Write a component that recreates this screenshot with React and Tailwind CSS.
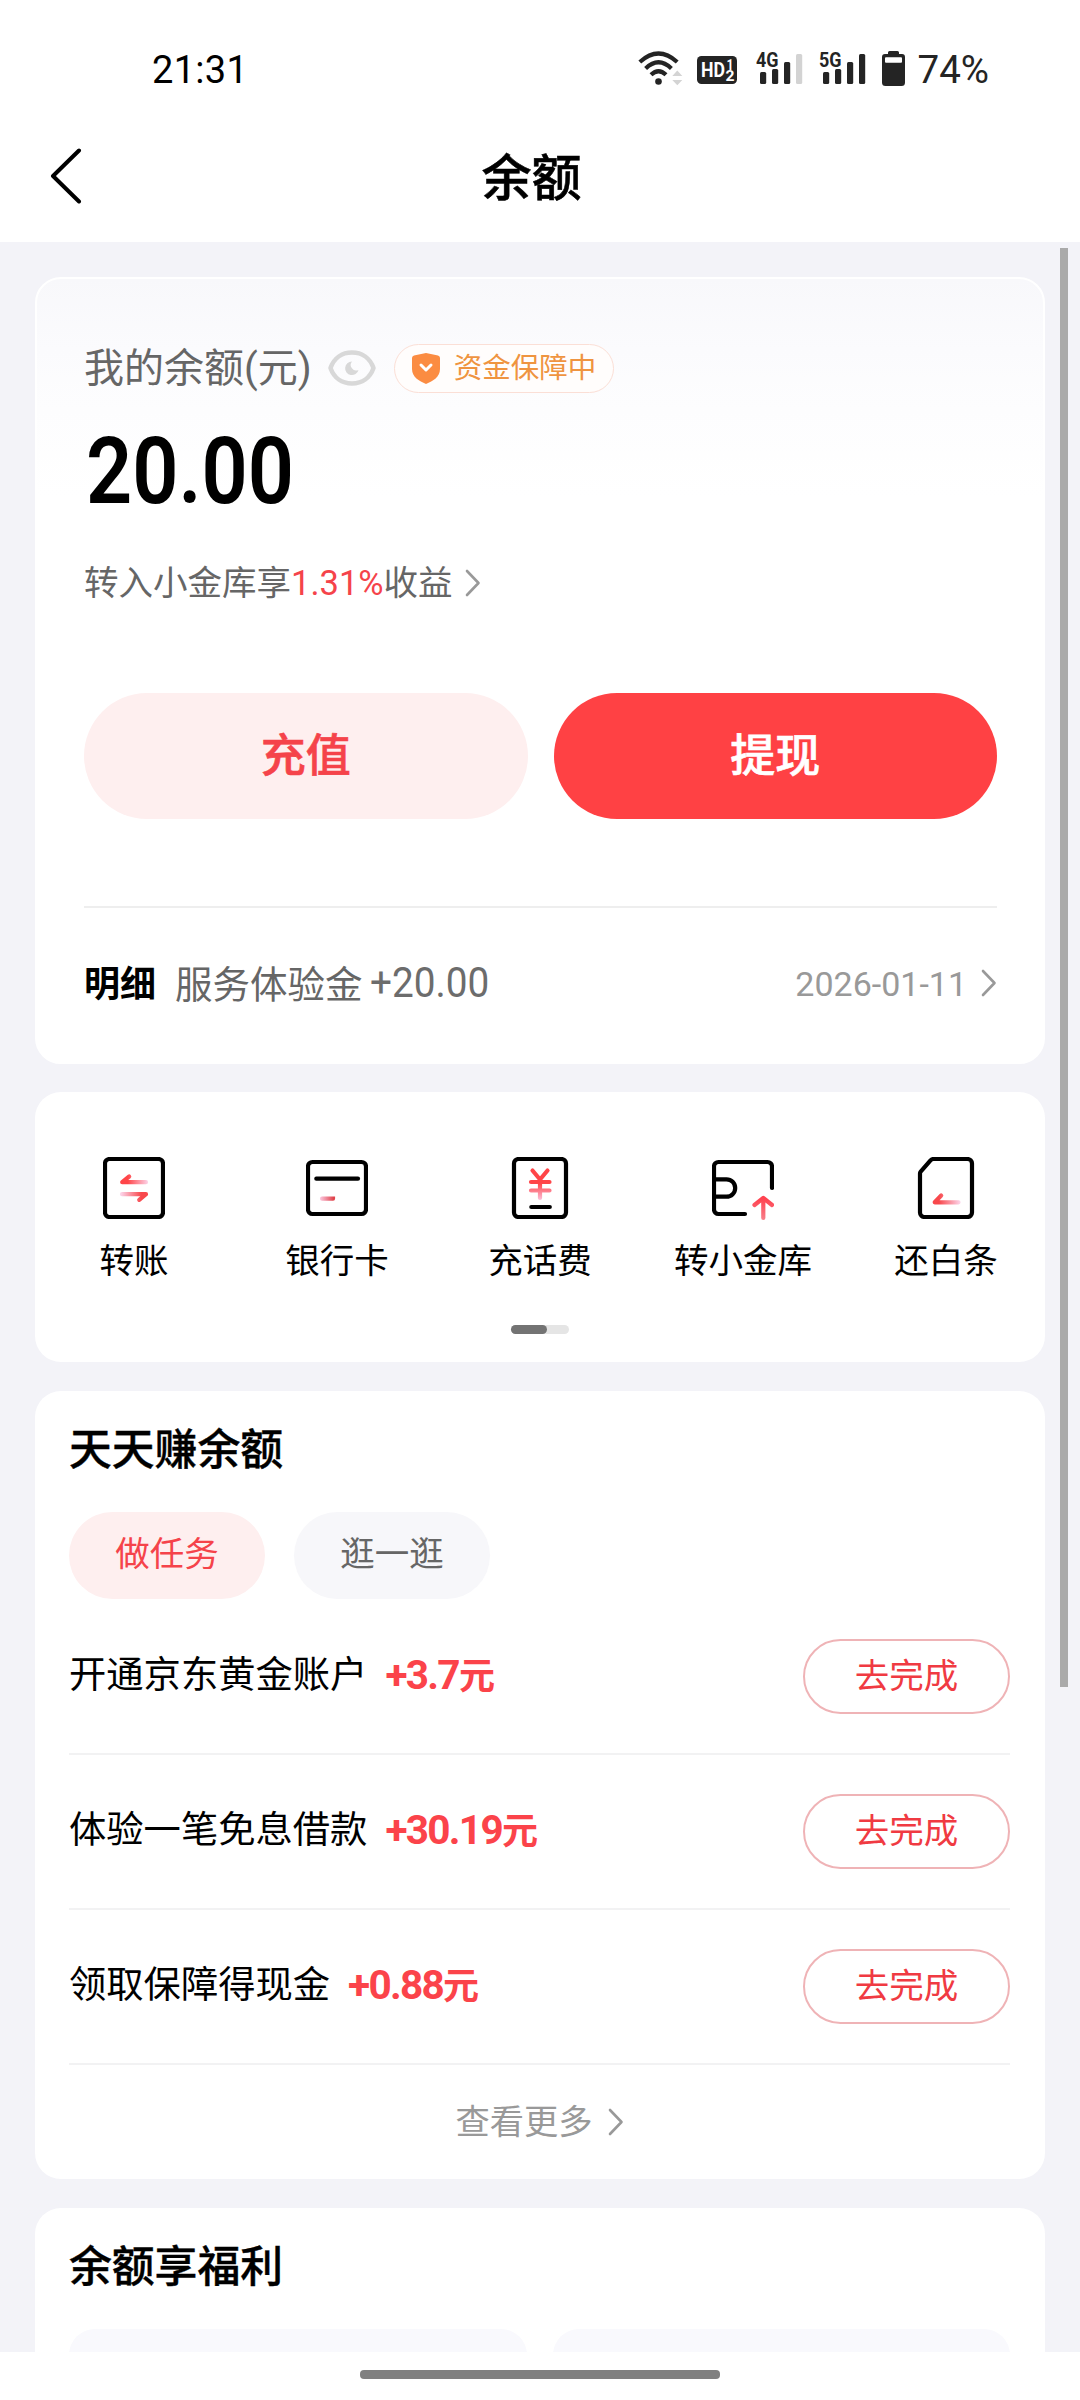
const DARK = "#242424";

function Chevron({ color = "#999" }) {
  return (
    <svg width="16" height="28" viewBox="0 0 16 28" fill="none" stroke={color} strokeWidth="2.6" strokeLinecap="round" strokeLinejoin="round">
      <path d="M2 2L13.5 14L2 26" />
    </svg>
  );
}

function WifiIcon() {
  return (
    <svg width="46" height="38" viewBox="18 19 46 38" fill="none" stroke={DARK} strokeWidth="4.2">
      <path d="M19.8 32Q38.5 15 57.2 32" />
      <path d="M25.6 38.4Q38.5 26 51.4 38.4" />
      <path d="M31 44.8Q38.5 37.6 46 44.8" />
      <circle cx="38.5" cy="51.5" r="3.3" fill={DARK} stroke="none" />
      <path d="M52.3 46L57.3 40.6L62.3 46ZM52.3 50H62.3L57.3 55.3Z" fill="#d4d4d4" stroke="none" />
    </svg>
  );
}

function HdIcon() {
  return (
    <svg width="40" height="28" viewBox="0 0 40 28" fontFamily="Roboto, sans-serif" fontWeight="700" fill="#fff">
      <rect width="40" height="28" rx="4.5" fill={DARK} />
      <text x="4" y="21.3" fontSize="21" textLength="24" lengthAdjust="spacingAndGlyphs">HD</text>
      <text x="29.5" y="13.5" fontSize="14" textLength="7" lengthAdjust="spacingAndGlyphs">1</text>
      <text x="28.5" y="25" fontSize="14" textLength="9" lengthAdjust="spacingAndGlyphs">2</text>
    </svg>
  );
}

function SignalIcon({ label, last }) {
  return (
    <svg width="48" height="46" viewBox="0 -6 48 46" fill={DARK}>
      <text x="0" y="16.3" fontSize="20.5" fontWeight="700" fontFamily="Roboto, sans-serif" textLength="22.5" lengthAdjust="spacingAndGlyphs">{label}</text>
      <rect x="4" y="21" width="6.2" height="12" rx="1.5" />
      <rect x="16" y="18" width="6.2" height="15" rx="1.5" />
      <rect x="28" y="11" width="6.2" height="22" rx="1.5" />
      <rect x="40" y="3" width="6.2" height="30" rx="1.5" fill={last} />
    </svg>
  );
}

function BatteryIcon() {
  return (
    <svg width="23" height="35" viewBox="0 0 23 35" fill={DARK}>
      <path d="M7.5 0h8a1.5 1.5 0 0 1 1.5 1.5V3h3a3 3 0 0 1 3 3v25.5a3.5 3.5 0 0 1-3.5 3.5h-16a3.5 3.5 0 0 1-3.5-3.5V6a3 3 0 0 1 3-3h3V1.5A1.5 1.5 0 0 1 7.5 0z" />
      <rect x="3" y="6.3" width="17" height="5.5" rx="1" fill="#fff" />
    </svg>
  );
}

function TransferIcon() {
  return (
    <svg width="62" height="62" viewBox="0 0 62 62" fill="none" strokeWidth="4.2" strokeLinecap="round" strokeLinejoin="round">
      <defs>
        <linearGradient id="tl" gradientUnits="userSpaceOnUse" x1="18" y1="0" x2="45" y2="0">
          <stop offset="0.25" stopColor="#ff4548" /><stop offset="1" stopColor="#fcd3e8" />
        </linearGradient>
        <linearGradient id="tr" gradientUnits="userSpaceOnUse" x1="45" y1="0" x2="18" y2="0">
          <stop offset="0.25" stopColor="#f8484c" /><stop offset="1" stopColor="#fcd3e8" />
        </linearGradient>
      </defs>
      <rect x="2" y="2" width="58" height="58" rx="4.5" stroke="#000" />
      <path d="M43 25.2H19.2L26.2 19.5" stroke="url(#tl)" />
      <path d="M19 37.2H43L36.2 42.8" stroke="url(#tr)" />
    </svg>
  );
}

function CardIcon() {
  return (
    <svg width="62" height="62" viewBox="0 0 62 62" fill="none" strokeWidth="4.2" strokeLinecap="round">
      <defs>
        <linearGradient id="cd" gradientUnits="userSpaceOnUse" x1="14" y1="0" x2="29" y2="0">
          <stop offset="0" stopColor="#fcc8e0" /><stop offset="0.9" stopColor="#e0444c" />
        </linearGradient>
      </defs>
      <rect x="2" y="5" width="58" height="52" rx="4.5" stroke="#000" />
      <path d="M10.3 21.7H52" stroke="#000" />
      <path d="M16 41.7H27v0.01" stroke="url(#cd)" />
    </svg>
  );
}

function PhoneBillIcon() {
  return (
    <svg width="62" height="62" viewBox="0 0 62 62" fill="none" strokeWidth="4.2" strokeLinecap="round" strokeLinejoin="round">
      <defs>
        <linearGradient id="pb" gradientUnits="userSpaceOnUse" x1="0" y1="12" x2="0" y2="44">
          <stop offset="0.45" stopColor="#ff4548" /><stop offset="1" stopColor="#fcc8e4" />
        </linearGradient>
      </defs>
      <rect x="5" y="2" width="52" height="58" rx="4.5" stroke="#000" />
      <path d="M23.5 13.5L31 22.5L38.5 13.5M22 25H40.5M22 33.5H40.5M31 22.5V41" stroke="url(#pb)" />
      <path d="M22.3 50H40.8" stroke="#000" />
    </svg>
  );
}

function VaultIcon() {
  return (
    <svg width="62" height="64" viewBox="0 0 62 64" fill="none" strokeWidth="4.2" strokeLinecap="round" strokeLinejoin="round">
      <defs>
        <linearGradient id="va" gradientUnits="userSpaceOnUse" x1="0" y1="38" x2="0" y2="64">
          <stop offset="0.15" stopColor="#ff4350" /><stop offset="1" stopColor="#f7848f" />
        </linearGradient>
      </defs>
      <path d="M60 31V9.5A4.5 4.5 0 0 0 55.5 5H6.5A4.5 4.5 0 0 0 2 9.5V52.5A4.5 4.5 0 0 0 6.5 57H33" stroke="#000" />
      <path d="M3 22.3H14.5A8.7 8.7 0 0 1 14.5 39.7H3" stroke="#000" />
      <path d="M51.3 61V41M42.5 48L51.3 41L60 48" stroke="url(#va)" />
    </svg>
  );
}

function RepayIcon() {
  return (
    <svg width="62" height="62" viewBox="0 0 62 62" fill="none" strokeWidth="4.2" strokeLinecap="round" strokeLinejoin="round">
      <defs>
        <linearGradient id="rp" gradientUnits="userSpaceOnUse" x1="17" y1="0" x2="45" y2="0">
          <stop offset="0.25" stopColor="#f8484c" /><stop offset="1" stopColor="#fcd3e8" />
        </linearGradient>
      </defs>
      <path d="M18.5 2H52.5A4.5 4.5 0 0 1 57 6.5V55.5A4.5 4.5 0 0 1 52.5 60H9.5A4.5 4.5 0 0 1 5 55.5V16.5Q5 15.5 5.7 14.7L15.5 3.3Q16.7 2 18.5 2Z" stroke="#000" />
      <path d="M43.5 45.3H19.7L26.2 38.5" stroke="url(#rp)" />
    </svg>
  );
}

const shortcuts = [
  ["转账", TransferIcon],
  ["银行卡", CardIcon],
  ["充话费", PhoneBillIcon],
  ["转小金库", VaultIcon],
  ["还白条", RepayIcon],
];

const tasks = [
  ["开通京东黄金账户", "+3.7"],
  ["体验一笔免息借款", "+30.19"],
  ["领取保障得现金", "+0.88"],
];

export default function App() {
  return (
    <div className="flex h-[2400px] w-[1080px] flex-col overflow-hidden bg-white font-['Roboto','Noto_Sans_CJK_SC',sans-serif] text-black">
      <div className="flex h-[139px] shrink-0 items-center pr-[91px] pl-[152px]">
        <span className="text-[38px] leading-[44px] tracking-[0.3px]">21:31</span>
        <div className="ml-auto flex items-center">
          <span className="pb-[3px]"><WifiIcon /></span>
          <span className="ml-[13px] pt-[1px]"><HdIcon /></span>
          <span className="ml-[19px] pb-[3px]"><SignalIcon label="4G" last="#d3d3d3" /></span>
          <span className="ml-[15px] pb-[3px]"><SignalIcon label="5G" last={DARK} /></span>
          <span className="ml-[15px] pb-[2px]"><BatteryIcon /></span>
          <span className="ml-[13px] text-[38.5px] leading-[44px] text-[#242424]">74%</span>
        </div>
      </div>
      <header className="grid h-[103px] shrink-0 grid-cols-[1fr_auto_1fr] items-center pr-[67px] pb-[25px] pl-[50px]">
        <svg className="mb-[5px]" width="32" height="56" viewBox="0 0 32 56" fill="none" stroke="#000" strokeWidth="4" strokeLinecap="round" strokeLinejoin="round">
          <path d="M29 2.5L3 28L29 53.5" />
        </svg>
        <h1 className="pt-[2px] text-[50px] leading-[60px] font-medium [-webkit-text-stroke:0.5px_#000]">余额</h1>
        <span />
      </header>

      <div className="relative flex h-[2110px] shrink-0 flex-col overflow-hidden bg-[#f3f3f8] px-[35px] pt-[35px]">
        <div className="absolute top-[6px] right-[12px] h-[1439px] w-[8px] bg-[#aaa]" />

        <section className="flex h-[787px] shrink-0 flex-col rounded-[26px] border-2 border-white bg-[linear-gradient(#f8f8fb,#fbfbfd_70px,#fdfdfe_130px,#fff_220px)] pr-[46px] pl-[47px]">
          <div className="mt-[64px] flex h-[50px] items-center">
            <span className="pt-[1px] text-[40px] leading-[50px] text-[#666]">我的余额(元)</span>
            <svg className="ml-[16px]" width="48" height="36" viewBox="0 0 48 36" fill="none">
              <path d="M2.5 18C6 8 14 2.5 24 2.5S42 8 45.5 18C42 28 34 33.5 24 33.5S6 28 2.5 18Z" stroke="#d8d8d8" strokeWidth="4.5" strokeLinejoin="round" />
              <path d="M24 11.5A6.8 6.8 0 1 0 30.5 20A5.5 5.5 0 0 1 24 11.5Z" fill="#d8d8d8" />
            </svg>
            <div className="ml-[18px] flex h-[49px] w-[220px] items-center rounded-full border-[1.5px] border-[#fbdfd6] bg-[#fffdfc] pl-[17px]">
              <svg width="28" height="31" viewBox="0 0 28 31">
                <path d="M14 0L26 2.5Q28 3 28 5V16C28 24 21 28 14 31C7 28 0 24 0 16V5Q0 3 2 2.5Z" fill="#fb8c42" />
                <path d="M9 12L14 17L19 12" fill="none" stroke="#fff" strokeWidth="3" strokeLinecap="round" strokeLinejoin="round" />
              </svg>
              <span className="ml-[14px] pt-[1px] text-[28.5px] leading-[40px] text-[#ef9440]">资金保障中</span>
            </div>
          </div>
          <div className="mt-[29px] ml-[2px] h-[100px] origin-left scale-x-[0.87] text-[93px] leading-[100px] font-semibold">20.00</div>
          <div className="mt-[41px] flex h-[40px] items-center text-[34.5px] leading-[40px] text-[#666]">
            转入小金库享<span className="text-[#f5434a]">1.31%</span>收益
            <span className="ml-[12px]"><Chevron /></span>
          </div>
          <div className="mt-[90px] grid h-[126px] grid-cols-2 gap-[26px] text-[45px] leading-[60px] font-medium">
            <button className="rounded-full bg-[#feefef] pt-[2px] text-[#f5434a] [-webkit-text-stroke:0.6px_#f5434a]">充值</button>
            <button className="rounded-full bg-[#ff4144] pt-[2px] text-white [-webkit-text-stroke:0.6px_#fff]">提现</button>
          </div>
          <div className="mt-[87px] h-[2px] bg-[#eee]" />
          <div className="mt-[49px] flex h-[54px] items-center">
            <span className="pt-[1px] text-[36px] leading-[54px] font-bold">明细</span>
            <span className="ml-[19px] pt-[1px] text-[37.5px] leading-[54px] text-[#666]">服务体验金</span>
            <span className="mb-[4px] ml-[7px] w-[130px] origin-left scale-x-[0.9] text-[43px] leading-[54px] font-normal text-[#6c6c6c]">+20.00</span>
            <span className="ml-auto text-[34px] leading-[54px] text-[#999]">2026-01-11</span>
            <span className="mb-[3px] ml-[14px]"><Chevron /></span>
          </div>
        </section>

        <section className="mt-[28px] flex h-[270px] shrink-0 flex-col items-center rounded-[26px] bg-white pt-[65px]">
          <div className="grid grid-cols-[repeat(5,203px)] justify-center">
            {shortcuts.map(([label, Icon]) => (
              <div key={label} className="flex flex-col items-center">
                <div className="h-[82px]"><Icon /></div>
                <span className="text-[34.5px] leading-[44px]">{label}</span>
              </div>
            ))}
          </div>
          <div className="mt-[42px] h-[9px] w-[58px] rounded-full bg-[#e5e5e5]">
            <div className="h-full w-[36px] rounded-full bg-[#737373]" />
          </div>
        </section>

        <section className="mt-[29px] flex h-[788px] shrink-0 flex-col rounded-[26px] bg-white pr-[35px] pl-[34px]">
          <h2 className="mt-[29px] text-[42.8px] leading-[60px] font-medium [-webkit-text-stroke:0.4px_#000]">天天赚余额</h2>
          <div className="mt-[32px] mb-[1px] flex h-[87px] gap-[29px] text-[34.5px]">
            <button className="w-[196px] rounded-full bg-[#feefef] text-[#f5434a]">做任务</button>
            <button className="w-[196px] rounded-full bg-[#f7f7fa] text-[#666]">逛一逛</button>
          </div>
          {tasks.map(([name, amount]) => (
            <div key={name} className="flex h-[155.6px] items-center border-b-2 border-[#f2f2f3]">
              <span className="mb-[1.5px] text-[37.3px] leading-[50px]">{name}</span>
              <span className="mb-[1px] ml-[18px] text-[40.5px] leading-[50px] font-bold tracking-[-1.7px] text-[#fb434a]">
                {amount}
                <span className="text-[36px]">元</span>
              </span>
              <button className="ml-auto h-[75px] w-[207px] rounded-full border-2 border-[#efb3b6] pt-[2px] text-[34.5px] text-[#f03a42]">去完成</button>
            </div>
          ))}
          <div className="flex h-[115px] items-center justify-center text-[34.3px] text-[#999]">
            <span className="pt-[1px]">查看更多</span>
            <span className="ml-[15px]"><Chevron /></span>
          </div>
        </section>

        <section className="mt-[29px] flex h-[400px] shrink-0 flex-col rounded-[26px] bg-white pr-[35px] pl-[34px]">
          <h2 className="mt-[29px] text-[42.8px] leading-[60px] font-medium [-webkit-text-stroke:0.4px_#000]">余额享福利</h2>
          <div className="mt-[32px] grid h-[200px] grid-cols-2 gap-[26px]">
            <div className="rounded-[26px] bg-[#f9f9fd]" />
            <div className="rounded-[26px] bg-[#f9f9fd]" />
          </div>
        </section>
      </div>

      <div className="flex justify-center pt-[18px]">
        <div className="h-[9px] w-[360px] rounded-[4px] bg-[#808080]" />
      </div>
    </div>
  );
}
